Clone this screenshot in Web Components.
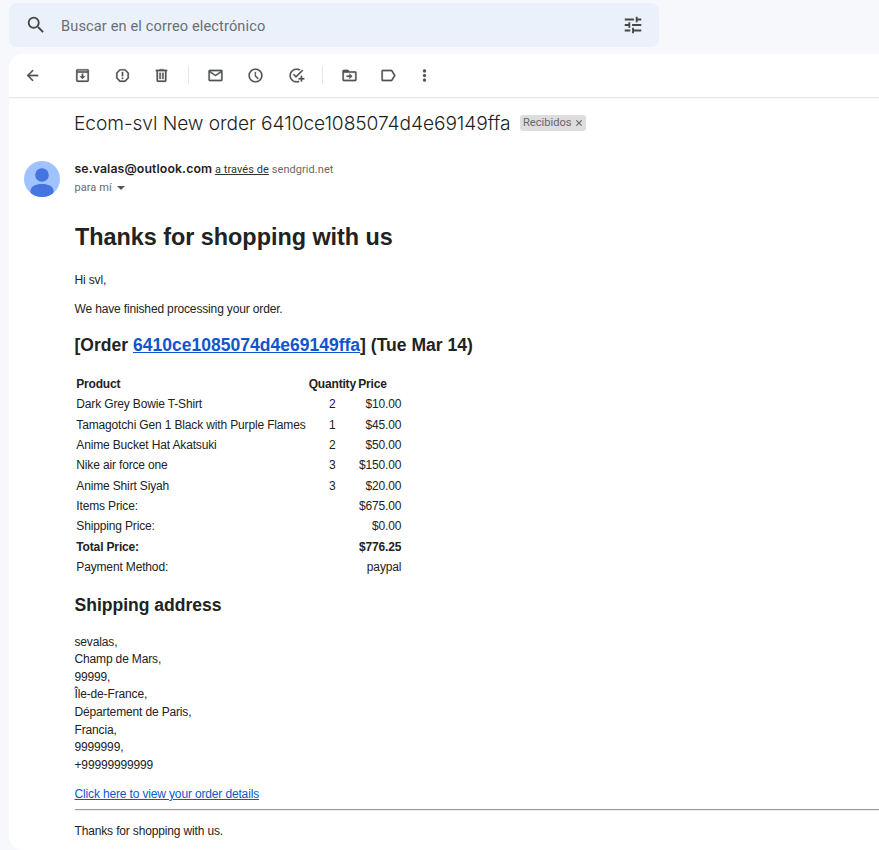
<!DOCTYPE html>
<html lang="es">
<head>
<meta charset="utf-8">
<title>Correo</title>
<style>
html,body{margin:0;height:850px;overflow:hidden;background:#f6f8fc;font-family:"Liberation Sans",Arial,sans-serif;color:#222}
</style>
</head>
<body>
<mail-app></mail-app>
<script>
const ICONS = {
  search:'<path d="M15.5 14h-.79l-.28-.27A6.47 6.47 0 0 0 16 9.5 6.5 6.5 0 1 0 9.5 16c1.61 0 3.09-.59 4.23-1.57l.27.28v.79l5 4.99L20.49 19l-4.99-5zm-6 0a4.5 4.5 0 1 1 0-9 4.5 4.5 0 0 1 0 9z"/>',
  tune:'<path d="M3 17v2h6v-2H3zM3 5v2h10V5H3zm10 16v-2h8v-2h-8v-2h-2v6h2zM7 9v2H3v2h4v2h2V9H7zm14 4v-2H11v2h10zm-6-4h2V7h4V5h-4V3h-2v6z"/>',
  back:'<path d="M20 11H7.83l5.59-5.59L12 4l-8 8 8 8 1.41-1.41L7.83 13H20v-2z"/>',
  archive:'<path fill-rule="evenodd" d="M5 3h14a2 2 0 0 1 2 2v14a2 2 0 0 1-2 2H5a2 2 0 0 1-2-2V5a2 2 0 0 1 2-2zm0 5v11h14V8H5zm0-3v1h14V5H5zm6 4.500h2V13h3l-4 4-4-4h3z"/>',
  spam:'<path fill-rule="evenodd" d="M8 3h8l5 5v8l-5 5H8l-5-5V8zM8.800 5L5 8.800v6.400L8.800 19h6.400l3.800-3.800V8.800L15.200 5zM11 7h2v6h-2zm0 8h2v2h-2z"/>',
  trash:'<path fill-rule="evenodd" d="M15 4V3H9v1H4v2h1v13a2 2 0 0 0 2 2h10a2 2 0 0 0 2-2V6h1V4h-5zm2 15H7V6h10v13zM9 8h2v9H9zm4 0h2v9h-2z"/>',
  mail:'<path d="M20 4H4a2 2 0 0 0-2 2v12a2 2 0 0 0 2 2h16a2 2 0 0 0 2-2V6a2 2 0 0 0-2-2zm-.8 2L12 10.800 4.800 6h14.400zM4 18V7.870l8 5.330 8-5.330V18H4z"/>',
  clock:'<path d="M12 2a10 10 0 1 0 0 20 10 10 0 0 0 0-20zm0 18a8 8 0 1 1 0-16 8 8 0 0 1 0 16zM12.500 7H11v6l4.200 4.200 1.300-1.300-4-3.900V7z"/>',
  task:'<path d="M21.300 5.300l-10 10-4.200-4.200 1.400-1.400 2.800 2.800 8.600-8.600zM18 12.500v3h-3v2h3v3h2v-3h3v-2h-3v-3zM12 20a8 8 0 1 1 4-14.900l1.500-1.500A10 10 0 1 0 16 21.200l-1-1.800c-.9.4-1.900.6-3 .6z"/>',
  move:'<path fill-rule="evenodd" d="M20 6h-8l-2-2H4a2 2 0 0 0-2 2v12a2 2 0 0 0 2 2h16a2 2 0 0 0 2-2V8a2 2 0 0 0-2-2zm0 12H4V8h16v10zm-8-1l4-4-4-4v3H8v2h4z"/>',
  label:'<path fill-rule="evenodd" d="M16 4H4a2 2 0 0 0-2 2v12a2 2 0 0 0 2 2h12c.7 0 1.300-.3 1.700-.9L22 12l-4.300-7.100C17.300 4.300 16.700 4 16 4zm0 14H4V6h12l3.600 6z"/>',
  more:'<circle cx="12" cy="5.500" r="2.200"/><circle cx="12" cy="12" r="2.200"/><circle cx="12" cy="18.500" r="2.200"/>'
};
const define = (tag, html, setup) => customElements.define(tag, class extends HTMLElement {
  connectedCallback(){
    if (this.shadowRoot) return;
    this.attachShadow({mode:'open'}).innerHTML = html;
    if (setup) setup(this, this.shadowRoot);
  }
});
define('mail-icon','<style>:host{display:block;width:var(--s,18px);height:var(--s,18px);flex:none}svg{display:block;width:100%;height:100%;fill:currentColor;stroke:currentColor;stroke-width:var(--w,0);overflow:visible}</style><svg viewBox="0 0 24 24"></svg>',
  (el,r)=>{ r.querySelector('svg').innerHTML = ICONS[el.getAttribute('name')]; });

define('mail-search',`<style>
:host{display:flex;align-items:center;box-sizing:border-box;width:650px;height:44px;margin:3px 0 0 9px;padding:0 15px 0 16px;border-radius:8px;background:#eaf1fb;color:#444746;font-family:Roboto,sans-serif}
mail-icon{--s:22px}
span{flex:1;margin-left:14px;font-size:14.6px;letter-spacing:.12px;color:#6a6e72;line-height:20px;padding-top:1px}
</style><mail-icon name="search"></mail-icon><span>Buscar en el correo electrónico</span><mail-icon name="tune"></mail-icon>`);

define('mail-toolbar',`<style>
:host{display:grid;grid-template-columns:50px 40px 39px 27px 27px 40px 41px 26px 27px 39px 36px 40px;align-items:center;height:43px;padding-left:15px;border-bottom:1px solid #e7e8ea;box-shadow:0 1px 0 #f7f7f8;color:#505352}
mail-icon{--s:17px;--w:.35;margin-top:-1px}
i{width:1px;height:18px;background:#e6e8ea;margin:-1px 0 0 8px}
</style>
<mail-icon name="back"></mail-icon><mail-icon name="archive"></mail-icon><mail-icon name="spam"></mail-icon><mail-icon name="trash"></mail-icon><i></i><mail-icon name="mail"></mail-icon><mail-icon name="clock"></mail-icon><mail-icon name="task"></mail-icon><i></i><mail-icon name="move"></mail-icon><mail-icon name="label"></mail-icon><mail-icon name="more"></mail-icon>`);

define('mail-chip',`<style>
:host{display:flex;align-items:center;box-sizing:border-box;width:66px;height:16px;padding:0 4px 0 3px;border-radius:3px;background:#ddd;color:#666;font:11.1px/15px Roboto,sans-serif;justify-content:space-between}
svg{width:6px;height:6px;stroke:#666;stroke-width:1.1;margin-top:1px}
</style><span><slot></slot></span><svg viewBox="0 0 6 6"><path d="M.3.3l5.400 5.400M5.700.3L.3 5.700"/></svg>`);

define('mail-subject',`<style>
:host{display:flex;align-items:center;height:28px;margin-top:11px;padding-left:65px;gap:9px;color:#1f1f1f}
h2{margin:0;font:350 19.200px/28px Inter,sans-serif;letter-spacing:-.09px;white-space:nowrap;width:437px}
mail-chip{margin-top:-1px}
</style><h2>Ecom-svl New order 6410ce1085074d4e69149ffa</h2><mail-chip>Recibidos</mail-chip>`);

define('mail-sender',`<style>
:host{display:flex;height:40px;margin-top:23px;padding-left:15px;font-family:Roboto,sans-serif;font-size:11px;color:#6a6a6a}
svg.a{width:36px;height:36px;flex:none;margin:1px 14.500px 0 0}
.l{display:flex;align-items:center;height:18px;white-space:nowrap}
.l b{font:600 12.300px/18px Inter,sans-serif;letter-spacing:.1px;color:#1f1f1f;width:140.500px}
u{color:#333;margin-right:3px;letter-spacing:.05px}
span{letter-spacing:.06px}
.c{width:8px;height:4px;fill:#555;margin:2px 0 0 5px}
</style><svg class="a" viewBox="0 0 36 36"><defs><clipPath id="k"><circle cx="18" cy="18" r="18"/></clipPath></defs><g clip-path="url(#k)"><path fill="#a0c3ff" d="M0 0h36v36H0z"/><circle cx="18" cy="14" r="6.800" fill="#4374e0"/><path fill="#4374e0" d="M6.500 30c0-4.500 5-7 11.500-7s11.500 2.500 11.500 7v6h-23z"/></g></svg>
<div><div class="l"><b>se.valas@outlook.com</b><u>a través de</u><span>sendgrid.net</span></div>
<div class="l"><span>para mí</span><svg class="c" viewBox="0 0 8 4"><path d="M0 0h8L4 4z"/></svg></div></div>`);

define('order-table',`<style>
:host{display:grid;grid-template-columns:230px 52px 43px;grid-auto-rows:20.35px;line-height:20.35px;margin-left:1.800px;white-space:nowrap}
.q{text-align:center}.p{text-align:right}.b{font-weight:700}
.h{letter-spacing:-.19px}.h:last-of-type{padding-left:.5px}
</style>`,(el,r)=>{
  const rows=[['Dark Grey Bowie T-Shirt','2','$10.00'],['Tamagotchi Gen 1 Black with Purple Flames','1','$45.00'],['Anime Bucket Hat Akatsuki','2','$50.00'],['Nike air force one','3','$150.00'],['Anime Shirt Siyah','3','$20.00'],['Items Price:','','$675.00'],['Shipping Price:','','$0.00'],['Total Price:','','$776.25','b'],['Payment Method:','','paypal']];
  r.innerHTML+='<div class="b h">Product</div><div class="q b h">Quantity</div><div class="b h">Price</div>'+
  rows.map(([n,q,p,b=''])=>`<div class="${b}"><span>${n}</span></div><div class="q">${q}</div><div class="p ${b}">${p}</div>`).join('');
});

define('order-message',`<style>
:host{display:block;margin:19.800px 0 0 65.500px;font-size:12px;letter-spacing:-.15px;line-height:17.550px;color:#222}
h1{font-size:23.400px;line-height:35.100px;margin:0 0 16.900px;letter-spacing:-.02px;padding-left:.5px}
h2{font-size:17.550px;line-height:26.300px;margin:13.100px 0 16px;letter-spacing:0}
h2.s{margin:14.900px 0 15.200px}
p{margin:0 0 11.700px}
a{color:#15c;text-decoration:underline}
hr{margin:5.600px 0 12px;border:0;height:1px;background:#999;border-bottom:1px solid #eee}
</style><h1>Thanks for shopping with us</h1><p>Hi svl,</p><p>We have finished processing your order.</p>
<h2>[Order <a>6410ce1085074d4e69149ffa</a>] (Tue Mar 14)</h2>
<order-table></order-table>
<h2 class="s">Shipping address</h2>
<p>sevalas,<br>Champ de Mars,<br>99999,<br>Île-de-France,<br>Département de Paris,<br>Francia,<br>9999999,<br>+99999999999</p>
<a>Click here to view your order details</a><hr><p>Thanks for shopping with us.</p>`);

define('mail-app',`<style>
:host{display:flow-root;height:850px;overflow:hidden}
main{margin:7px 0 0 9px;height:796px;background:#fff;border-radius:14px 0 0 14px;overflow:hidden}
</style><mail-search></mail-search><main><mail-toolbar></mail-toolbar><mail-subject></mail-subject><mail-sender></mail-sender><order-message></order-message></main>`);
</script>
</body>
</html>
